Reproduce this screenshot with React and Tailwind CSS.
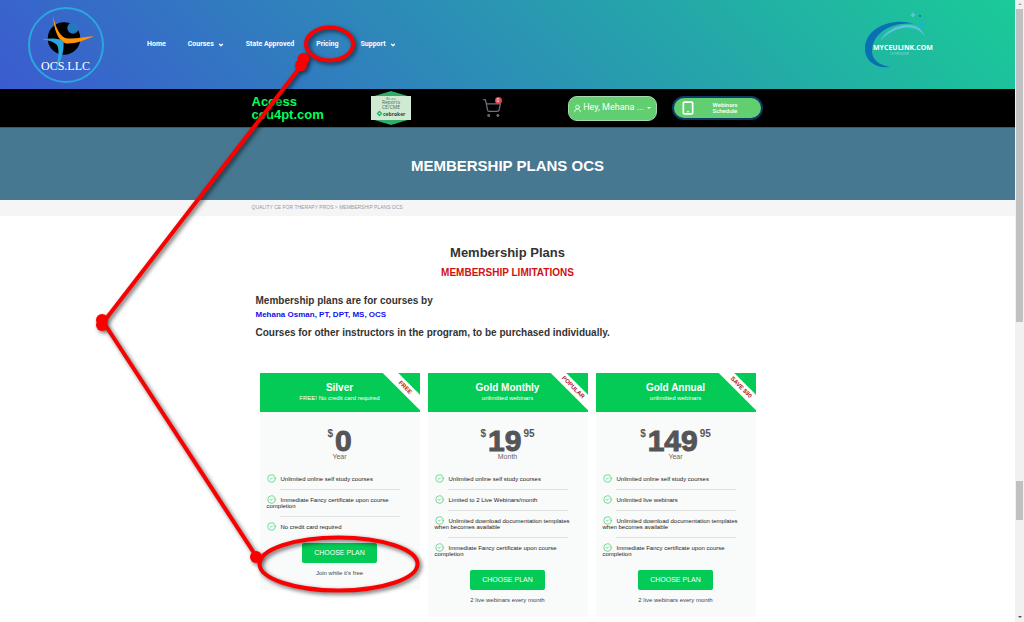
import React from 'react'
import { ChevronDown, CircleCheck, ShoppingCart, Tablet, UserRound } from 'lucide-react'

const navItems = [
  { label: 'Home' },
  { label: 'Courses', menu: true },
  { label: 'State Approved' },
  { label: 'Pricing' },
  { label: 'Support', menu: true },
]

const plans = [
  {
    name: 'Silver',
    tagline: 'FREE! No credit card required',
    ribbon: 'FREE',
    price: '0',
    period: 'Year',
    features: [
      'Unlimited online self study courses',
      'Immediate Fancy certificate upon course completion',
      'No credit card required',
    ],
    note: "Join while it's free",
  },
  {
    name: 'Gold Monthly',
    tagline: 'unlimitted webinars',
    ribbon: 'POPULAR',
    price: '19',
    cents: '95',
    period: 'Month',
    features: [
      'Unlimited online self study courses',
      'Limited to 2 Live Webinars/month',
      'Unlimited download documentation templates when becomes available',
      'Immediate Fancy certificate upon course completion',
    ],
    note: '2 live webinars every month',
  },
  {
    name: 'Gold Annual',
    tagline: 'unlimitted webinars',
    ribbon: 'SAVE $90',
    price: '149',
    cents: '95',
    period: 'Year',
    features: [
      'Unlimited online self study courses',
      'Unlimited live webinars',
      'Unlimited download documentation templates when becomes available',
      'Immediate Fancy certificate upon course completion',
    ],
    note: '2 live webinars every month',
  },
]

function OcsLogo() {
  return (
    <svg viewBox="0 0 78 78" className="h-[78px] w-[78px]" role="img" aria-label="OCS.LLC">
      <circle cx="39" cy="39" r="37" fill="none" stroke="#2ba6de" strokeWidth="2" />
      <circle cx="37" cy="32.500" r="16.300" fill="#000" />
      <circle cx="46" cy="22" r="5.700" fill="#2478bd" />
      <path d="M26 10 C29 22 33 32 41 32.500 C49 33 58 31 67 30 C59 34 48 38 39 37.500 C31 35 27 24 26 10 Z" fill="#ff9408" />
      <path d="M15 33.500 C23 32 34 32 36.500 36 C37.500 44 34 57 28 65 C31 55 33 44 30 39 C27 36 22 34 15 33.500 Z" fill="#2ba6de" />
      <text x="38.500" y="63.500" textAnchor="middle" fontSize="12" fill="#fff" fontFamily="'Liberation Serif', serif">OCS.LLC</text>
    </svg>
  )
}

function CeuLogo() {
  return (
    <svg viewBox="0 0 68 58" className="h-[58px] w-[68px]" role="img" aria-label="MYCEULINK.COM CE provider">
      <path d="M49 12 C30 5 0 14 0 37 C0 49 11 57 25 55 C13 53 7 47 7 39 C7 22 26 9 49 12 Z" fill="#0a70b4" />
      <path d="M15 29 C24 12 54 5 60 25 C51 10 29 14 15 29 Z" fill="#62bfe0" />
      <path d="M48 0 L49 2 L51 3 L49 4 L48 6 L47 4 L45 3 L47 2 Z" fill="#5fc5de" />
      <circle cx="55" cy="4" r="1" fill="#0a70b4" />
      <path d="M57 9 L58 11 L60 12 L58 13 L57 15 L56 13 L53 12 L56 11 Z" fill="#12b2f0" />
      <text x="8" y="38" fontSize="7" fontWeight="700" fill="#fff" fontFamily="'Open Sans', sans-serif">MYCEULINK.COM</text>
      <text x="25" y="43" fontSize="3" fill="#8fe0d8" fontFamily="'Open Sans', sans-serif">CE PROVIDER</text>
    </svg>
  )
}

function CeBrokerBadge() {
  return (
    <svg viewBox="0 0 40 36" className="h-9 w-10" role="img" aria-label="Reports CE/CME, ce broker">
      <path d="M0 7 L20 1 L40 7 V29 L20 35 L0 29 Z" fill="#2fae6a" />
      <rect x="0" y="6" width="40" height="24" fill="#cfe9d3" />
      <g textAnchor="middle" fill="#47705b" fontFamily="'Open Sans', sans-serif">
        <text x="20" y="10" fontSize="3">We are</text>
        <text x="20" y="14" fontSize="5">Reports</text>
        <text x="20" y="19" fontSize="5">CE/CME</text>
      </g>
      <path d="M8.500 21.500 l2 2 l-2 2 l-2 -2 z" fill="none" stroke="#2fae6a" strokeWidth="1.300" />
      <text x="12" y="26" fontSize="5" fontWeight="700" fill="#1f4a3a" fontFamily="'Open Sans', sans-serif">cebroker</text>
    </svg>
  )
}

function Header() {
  return (
    <header className="flex h-[89px] items-center bg-[linear-gradient(45deg,#3b5bd0_0%,#1acb97_100%)] pl-[27px]">
      <OcsLogo />
      <nav className="ml-[42px] flex gap-[22px] font-['Roboto',sans-serif] text-[7px] font-bold text-white">
        {navItems.map((item) => (
          <a key={item.label} href="#" className="flex items-center gap-1">
            {item.label}
            {item.menu && <ChevronDown className="h-[6px] w-[6px]" strokeWidth={5} />}
          </a>
        ))}
      </nav>
      <div className="mr-[82px] ml-auto pb-2">
        <CeuLogo />
      </div>
    </header>
  )
}

function AccessBar() {
  return (
    <div className="bg-black">
      <div className="mx-auto grid h-[38px] max-w-[512px] grid-cols-[119fr_111fr_86fr_104fr_92fr] items-center">
        <a href="#" className="text-[13px] leading-[13px] font-bold text-[#00ff5e]">
          Access
          <br />
          ceu4pt.com
        </a>
        <CeBrokerBadge />
        <a href="#" aria-label="Cart" className="relative w-5">
          <ShoppingCart className="h-5 w-5 text-[#6b7280]" strokeWidth={1.5} />
          <span className="absolute -top-px right-0 h-[7px] w-[7px] rounded-full bg-[#e0454b] text-center text-[5px] leading-[7px] text-white">0</span>
        </a>
        <button className="flex h-[25px] w-[89px] items-center justify-center gap-px rounded-[9px] border border-[#a5dcae] bg-[#61ce70] font-['Roboto',sans-serif] text-[9px] whitespace-nowrap text-white">
          <UserRound className="h-[9px] w-[9px]" />
          Hey, Mehana ...
          <span className="ml-0.5 border-x-2 border-t-2 border-x-transparent border-t-white" />
        </button>
        <button className="flex h-6 w-[91px] items-center gap-[18px] rounded-full border-2 border-[#0d3b66] bg-[#61ce70] pl-[7px] text-left font-['Roboto',sans-serif] text-[6px] leading-[6px] font-medium text-white">
          <Tablet className="h-3.5 w-3.5" strokeWidth={3} />
          <span>
            Webinars
            <br />
            Schedule
          </span>
        </button>
      </div>
    </div>
  )
}

function PlanCard({ plan }) {
  return (
    <section className="bg-[#f9fafa]">
      <div className="relative h-[39px] overflow-hidden bg-[#03cb55] pt-2 text-center text-white">
        <h3 className="text-[10px] leading-[13px] font-bold">{plan.name}</h3>
        <p className="text-[6px] leading-2">{plan.tagline}</p>
        <span className="absolute top-[9px] -right-[25px] h-[11px] w-20 rotate-45 bg-white text-[6px] leading-[11px] font-bold text-[#a81c1c]">
          {plan.ribbon}
        </span>
      </div>

      <div className="flex items-start justify-center gap-0.5 pt-[17px] font-bold text-[#555]">
        <span className="text-[10px] leading-[10px]">$</span>
        <span className="text-[30px] leading-[24px] [-webkit-text-stroke:1px_#555]">{plan.price}</span>
        {plan.cents && <span className="text-[10px] leading-[10px]">{plan.cents}</span>}
      </div>
      <p className="text-center text-[7px] leading-[7px] text-[#666]">{plan.period}</p>

      <ul className="mt-[9px] text-[6px] leading-[6px] text-[#222]">
        {plan.features.map((feature) => (
          <li key={feature} className="group">
            <p className="px-[7px] py-[7px]">
              <CircleCheck className="-mt-[5px] mr-[5px] -mb-[3px] inline-block h-[9px] w-[9px] text-[#4fcb7e]" />
              {feature}
            </p>
            <div className="mx-5 h-px bg-[#e2e4e4] group-last:hidden" />
          </li>
        ))}
      </ul>

      <div className="pt-px pb-[13px] text-center">
        <button className="h-5 w-[75px] rounded-xs bg-[#03cb55] text-[7px] text-white">CHOOSE PLAN</button>
        <p className="pt-[6px] text-[6px] leading-2 text-[#444]">{plan.note}</p>
      </div>
    </section>
  )
}

function ScrollRail() {
  return (
    <div className="flex w-[9px] shrink-0 flex-col items-center bg-[#f1f1f1] px-px" aria-hidden="true">
      <span className="mt-[3px] mb-1 border-x-2 border-b-2 border-x-transparent border-b-[#a3a3a3]" />
      <span className="w-full flex-[312_1_0%] bg-[#c1c1c1]" />
      <span className="flex-[158_1_0%]" />
      <span className="w-full flex-[39_1_0%] bg-[#c1c1c1]" />
      <span className="flex-[96_1_0%]" />
      <span className="mb-1 border-x-2 border-t-2 border-x-transparent border-t-[#505050]" />
    </div>
  )
}

// Red callout drawn over the page: Pricing link -> free plan button
function Callout() {
  return (
    <svg viewBox="0 0 1024 622" className="pointer-events-none absolute top-0 left-0 h-[622px] w-[1024px]" aria-hidden="true">
      <g className="drop-shadow-[2px_2px_2px_rgba(0,0,0,0.6)]" fill="none" stroke="#fb0000" strokeWidth="4">
        <ellipse cx="329.500" cy="44" rx="23.500" ry="16.500" />
        <path d="M301 66 L102 324" />
        <path d="M102 320 L256 556" />
        <ellipse cx="338.500" cy="564" rx="79" ry="26.500" />
        <g fill="#fb0000" stroke="none">
          <circle cx="303.500" cy="59" r="6" />
          <circle cx="301" cy="65.500" r="6" />
          <circle cx="102" cy="320" r="6" />
          <circle cx="102" cy="325" r="6" />
          <circle cx="256" cy="557" r="6" />
        </g>
      </g>
    </svg>
  )
}

export default function App() {
  return (
    <div className="relative flex min-h-screen overflow-hidden bg-white font-['Liberation_Sans',Arial,sans-serif]">
      <div className="min-w-0 flex-1">
        <Header />
        <AccessBar />

        <div className="flex h-[73px] items-center justify-center border-t border-[#3c5878] bg-[#467891] pt-1">
          <h1 className="text-[15px] font-bold text-white">MEMBERSHIP PLANS OCS</h1>
        </div>
        <div className="h-4 bg-[#f5f5f6]">
          <p className="mx-auto max-w-[512px] text-[5px] leading-[14px] text-[#999]">
            <a href="#">QUALITY CE FOR THERAPY PROS</a> &gt; MEMBERSHIP PLANS OCS
          </p>
        </div>

        <main className="mx-auto max-w-[504px] pt-[29px] text-[#333]">
          <h2 className="text-center text-[13px] leading-4 font-bold">Membership Plans</h2>
          <p className="mt-1 text-center text-[10px] leading-4 font-bold text-[#d21111]">MEMBERSHIP LIMITATIONS</p>

          <h3 className="mt-3 text-[10px] leading-4 font-bold">Membership plans are for courses by</h3>
          <a href="#" className="block text-[8px] leading-3 font-bold text-[#1010ee]">Mehana Osman, PT, DPT, MS, OCS</a>
          <p className="mt-1 text-[10px] leading-4 font-bold">Courses for other instructors in the program, to be purchased individually.</p>

          <div className="mx-1 mt-8 grid grid-cols-3 items-start gap-2">
            {plans.map((plan) => (
              <PlanCard key={plan.name} plan={plan} />
            ))}
          </div>
        </main>
      </div>
      <ScrollRail />
      <Callout />
    </div>
  )
}
